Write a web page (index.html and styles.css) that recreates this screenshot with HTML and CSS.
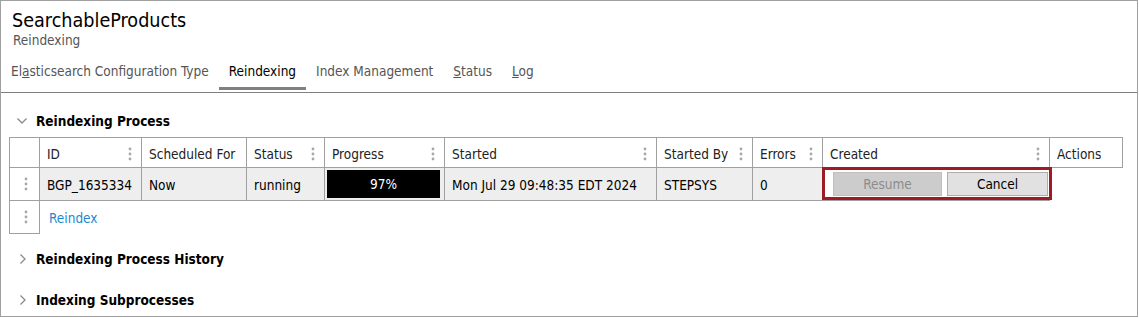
FILE: index.html
```html
<!DOCTYPE html>
<html>
    <head>
        <meta charset="UTF-8">
        <title>SearchableProducts - Reindexing</title>
        <link rel="stylesheet" href="styles.css">
    </head>
    <body>
        <div class="page">
            <div class="header">
                <div class="title">SearchableProducts</div>
                <div class="subtitle">Reindexing</div>
                <div class="tabs">
                    <span class="tab">El<u>a</u>sticsearch Configuration Type</span>
                    <span class="tab active">Reindexing</span>
                    <span class="tab">Index Management</span>
                    <span class="tab"><u>S</u>tatus</span>
                    <span class="tab"><u>L</u>og</span>
                </div>
            </div>

            <div class="content">
                <div class="section-head">
                    <svg class="chev-down" width="10" height="6" viewBox="0 0 10 6"><polyline points="0.5,0.5 5,5 9.5,0.5" /></svg>
                    <span>Reindexing Process</span>
                </div>

                <table class="grid">
                    <colgroup>
                        <col class="c-handle">
                        <col class="c-id">
                        <col class="c-sched">
                        <col class="c-status">
                        <col class="c-progress">
                        <col class="c-started">
                        <col class="c-by">
                        <col class="c-errors">
                        <col class="c-created">
                        <col class="c-actions">
                    </colgroup>
                    <tr class="head-row">
                        <th></th>
                        <th><div class="th-in">ID <svg class="dots" width="4" height="14" viewBox="0 0 4 14"><circle cx="2" cy="2" r="1.4"/><circle cx="2" cy="7" r="1.4"/><circle cx="2" cy="12" r="1.4"/></svg></div></th>
                        <th><div class="th-in">Scheduled For</div></th>
                        <th><div class="th-in">Status <svg class="dots" width="4" height="14" viewBox="0 0 4 14"><circle cx="2" cy="2" r="1.4"/><circle cx="2" cy="7" r="1.4"/><circle cx="2" cy="12" r="1.4"/></svg></div></th>
                        <th><div class="th-in">Progress <svg class="dots" width="4" height="14" viewBox="0 0 4 14"><circle cx="2" cy="2" r="1.4"/><circle cx="2" cy="7" r="1.4"/><circle cx="2" cy="12" r="1.4"/></svg></div></th>
                        <th><div class="th-in">Started <svg class="dots" width="4" height="14" viewBox="0 0 4 14"><circle cx="2" cy="2" r="1.4"/><circle cx="2" cy="7" r="1.4"/><circle cx="2" cy="12" r="1.4"/></svg></div></th>
                        <th><div class="th-in">Started By <svg class="dots" width="4" height="14" viewBox="0 0 4 14"><circle cx="2" cy="2" r="1.4"/><circle cx="2" cy="7" r="1.4"/><circle cx="2" cy="12" r="1.4"/></svg></div></th>
                        <th><div class="th-in">Errors <svg class="dots" width="4" height="14" viewBox="0 0 4 14"><circle cx="2" cy="2" r="1.4"/><circle cx="2" cy="7" r="1.4"/><circle cx="2" cy="12" r="1.4"/></svg></div></th>
                        <th><div class="th-in">Created <svg class="dots" width="4" height="14" viewBox="0 0 4 14"><circle cx="2" cy="2" r="1.4"/><circle cx="2" cy="7" r="1.4"/><circle cx="2" cy="12" r="1.4"/></svg></div></th>
                        <th><div class="th-in">Actions</div></th>
                    </tr>
                    <tr class="data-row">
                        <td class="handle"><svg class="dots" width="4" height="14" viewBox="0 0 4 14"><circle cx="2" cy="2" r="1.4"/><circle cx="2" cy="7" r="1.4"/><circle cx="2" cy="12" r="1.4"/></svg></td>
                        <td>BGP_1635334</td>
                        <td>Now</td>
                        <td>running</td>
                        <td class="progress-cell"><div class="progress">97%</div></td>
                        <td>Mon Jul 29 09:48:35 EDT 2024</td>
                        <td>STEPSYS</td>
                        <td>0</td>
                        <td class="actions-cell">
                            <div class="btns">
                                <button class="btn btn-resume" disabled>Resume</button>
                                <button class="btn btn-cancel">Cancel</button>
                            </div>
                        </td>
                        <td class="empty"></td>
                    </tr>
                    <tr class="add-row">
                        <td class="handle"><svg class="dots" width="4" height="14" viewBox="0 0 4 14"><circle cx="2" cy="2" r="1.4"/><circle cx="2" cy="7" r="1.4"/><circle cx="2" cy="12" r="1.4"/></svg></td>
                        <td class="empty" colspan="9"><a class="link" href="#">Reindex</a></td>
                    </tr>
                </table>

                <div class="section-head collapsed">
                    <svg class="chev-right" width="6" height="10" viewBox="0 0 6 10"><polyline points="0.5,0.5 5,5 0.5,9.5" /></svg>
                    <span>Reindexing Process History</span>
                </div>
                <div class="section-head collapsed">
                    <svg class="chev-right" width="6" height="10" viewBox="0 0 6 10"><polyline points="0.5,0.5 5,5 0.5,9.5" /></svg>
                    <span>Indexing Subprocesses</span>
                </div>
            </div>
        </div>
    </body>
</html>
```

FILE: styles.css
```css
/* base */
body {
    margin: 0;
    font-family: "DejaVu Sans Condensed", "Liberation Sans", sans-serif;
    font-size: 13.5px;
    color: #000;
    background-color: #fff;
}

.page {
    width: 1138px;
    height: 317px;
    box-sizing: border-box;
    border: 1px solid #a0a0a0;
    overflow: hidden;
}

/* header + tabs */
.header {
    padding-top: 9px;
    border-bottom: 1px solid #808080;
}

.title {
    padding-left: 11px;
    font-size: 19.6px;
    line-height: 22px;
}

.subtitle {
    padding-left: 12px;
    color: #555;
    line-height: 16px;
}

.tabs {
    display: flex;
    margin-bottom: 2px;
}

.tab {
    padding: 15px 10px 8px 10px;
    line-height: 16px;
    color: #555;
    border-bottom: 3px solid transparent;
}

.tab.active {
    color: #000;
    border-bottom-color: #808080;
}

/* sections */
.content {
    padding: 12px 0 0 8px;
}

.section-head {
    display: flex;
    align-items: center;
    height: 32px;
    padding-left: 8px;
    font-weight: bold;
}

.section-head svg {
    fill: none;
    stroke: #8a8a8a;
    stroke-width: 1.3;
}

.chev-down {
    margin-right: 9px;
}

.chev-right {
    margin-left: 3px;
    margin-right: 10px;
}

.section-head.collapsed {
    margin-top: 9px;
}

.grid + .section-head {
    margin-top: 9px;
}

/* table */
.grid {
    border-collapse: collapse;
    table-layout: fixed;
    width: 1114px;
}

.c-handle { width: 30px; }
.c-id { width: 102px; }
.c-sched { width: 105px; }
.c-status { width: 78px; }
.c-progress { width: 120px; }
.c-started { width: 212px; }
.c-by { width: 96px; }
.c-errors { width: 70px; }
.c-created { width: 227px; }
.c-actions { width: 73px; }

.grid th {
    height: 27px;
    padding: 2px 9px 0 7px;
    border: 1px solid #a0a0a0;
    font-weight: normal;
    text-align: left;
    color: #222;
    white-space: nowrap;
}

.th-in {
    display: flex;
    justify-content: space-between;
    align-items: center;
}

.dots {
    fill: #a8a8a8;
    flex: none;
}

.grid td {
    height: 30px;
    padding: 2px 7px 0 7px;
    border: 1px solid #a0a0a0;
    white-space: nowrap;
}

.data-row td {
    background-color: #eeeeee;
}

.grid td.handle {
    background-color: #fff;
    padding: 0 0 0 2px;
}

.handle .dots {
    display: block;
    margin: 0 auto;
}

.grid td.empty {
    border: none;
    background-color: #fff;
}

.grid td.progress-cell {
    padding: 1px 4px 1px 2px;
}

.progress {
    height: 28px;
    line-height: 28px;
    background-color: #000;
    color: #fff;
    text-align: center;
}

/* actions with the red frame on top */
.grid td.actions-cell {
    position: relative;
    padding: 0 0 0 10px;
    background-color: #fff;
}

.actions-cell::after {
    content: "";
    position: absolute;
    top: -1px;
    left: -1px;
    right: -3px;
    bottom: 0;
    border: 3px solid #9e1b25;
    pointer-events: none;
}

.btns {
    display: flex;
    gap: 5px;
}

.btn {
    height: 24px;
    padding: 0;
    font-family: inherit;
    font-size: 13.5px;
    border: 1px solid #adadad;
    border-radius: 0;
}

.btn-resume {
    width: 109px;
    background-color: #cccccc;
    border-color: #bfbfbf;
    color: #8c8c8c;
}

.btn-cancel {
    width: 101px;
    background-color: #e1e1e1;
    color: #000;
}

.add-row .empty {
    padding-left: 9px;
}

.link {
    color: #1e88d0;
    text-decoration: none;
}
```
